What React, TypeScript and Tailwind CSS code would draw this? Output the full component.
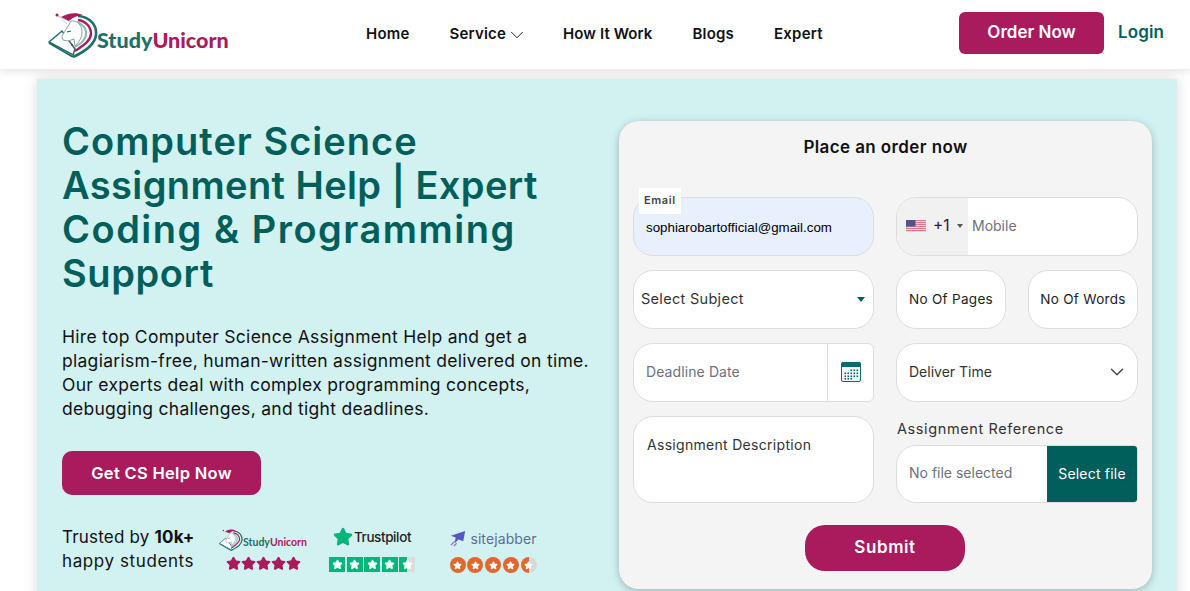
import React from 'react';
import { ChevronDown, Star } from 'lucide-react';

const font = "font-['Inter','Noto_Sans',sans-serif]";

const UnicornLogo: React.FC<{ className?: string }> = ({ className }) => (
  <svg viewBox="0 0 50 46" className={className} fill="none">
    {/* book */}
    <path d="M1 30 L14 19 L27 37 L25 43 Z" fill="#ffffff" stroke="#1f6f6a" strokeWidth="1.5" />
    <path d="M1 31 L25 45" stroke="#1f6f6a" strokeWidth="2" />
    {/* mane */}
    <path d="M30 4 C42 5 49 13 48 23 C47 33 36 40 25 45" stroke="#1f6f6a" strokeWidth="2.6" />
    <path d="M30 8 C38 9 43 15 43 22 C42 30 34 34 27 39" stroke="#a91b5c" strokeWidth="2.4" />
    <path d="M29 10 C35 12 39 17 38 23 C37 29 32 32 27 35" stroke="#8fb8b5" strokeWidth="2" />
    {/* head */}
    <path d="M23 9 C29 8 34 13 34 20 C34 26 31 30 27 34 L26 27 L20 29 L15 28 L14 24 Z" fill="#ffffff" stroke="#7d9c9a" strokeWidth="0.9" />
    <path d="M19 20 L23 19" stroke="#33504e" strokeWidth="1.1" />
    {/* horn */}
    <path d="M22 10 L9 3 L19 12" fill="#ffffff" stroke="#a8bcbb" strokeWidth="0.7" />
    {/* hat */}
    <path d="M13 5 C20 1 28 0 35 3 C28 4 24 6 21 9 Z" fill="#a91b5c" />
    <circle cx="9" cy="3" r="1.5" fill="#a91b5c" />
    <circle cx="24" cy="33" r="0.9" fill="#a91b5c" />
  </svg>
);

const FlagUS: React.FC = () => (
  <svg viewBox="0 0 20 12" className="h-[12px] w-[20px]">
    <rect width="20" height="12" fill="#f3e3e5" />
    {[0, 2, 4, 6, 8, 10].map((y) => (
      <rect key={y} y={y} width="20" height="1.2" fill="#d67f8b" />
    ))}
    <rect width="9.5" height="6.5" fill="#50548a" />
  </svg>
);

const CalendarIcon: React.FC = () => (
  <svg viewBox="0 0 20 20" className="size-[20px]">
    <rect x="0.5" y="0.5" width="19" height="19" rx="1.5" fill="#f3f9fb" stroke="#0b6a70" />
    <rect x="0.5" y="0.5" width="19" height="4.5" fill="#0b6a70" />
    {[7.5, 10.5, 13.5, 16].map((y) =>
      [3.5, 6.5, 9.5, 12.5, 15.5].map((x) =>
        (y === 7.5 && x < 8) || (y === 16 && x > 11) ? null : <rect key={`${x}-${y}`} x={x} y={y} width="1.6" height="1.6" fill="#0b5f66" />
      )
    )}
  </svg>
);

const Pill: React.FC<{ className?: string; children: React.ReactNode }> = ({ className = 'bg-white', children }) => (
  <div className={`flex h-[59px] items-center rounded-[20px] border border-[#dddddd] ${className}`}>{children}</div>
);

const StarRow: React.FC = () => (
  <div className="flex">
    {[0, 1, 2, 3, 4].map((i) => (
      <Star key={i} size={15} fill="#a91b5c" stroke="#a91b5c" />
    ))}
  </div>
);

const TrustpilotRow: React.FC = () => (
  <div className="flex gap-[1.5px]">
    {[0, 1, 2, 3, 4].map((i) => (
      <div key={i} className={`flex h-[15px] w-[16px] items-center justify-center ${i === 4 ? 'bg-gradient-to-r from-[#00b67a] from-50% to-[#dcdcdc] to-50%' : 'bg-[#00b67a]'}`}>
        <Star size={11} fill="#ffffff" stroke="#ffffff" />
      </div>
    ))}
  </div>
);

const JabberRow: React.FC = () => (
  <div className="flex gap-[1.75px]">
    {[0, 1, 2, 3, 4].map((i) => (
      <div key={i} className={`flex size-[16px] items-center justify-center rounded-full ${i === 4 ? 'bg-gradient-to-r from-[#e2672a] from-50% to-[#d9d9d9] to-50%' : 'bg-[#e2672a]'}`}>
        <Star size={9} fill="#ffffff" stroke="#ffffff" />
      </div>
    ))}
  </div>
);

const App: React.FC = () => {
  return (
    <div className={`h-[591px] w-[1190px] overflow-hidden bg-white ${font}`}>
      <header className="relative flex h-[69px] items-center bg-white pl-[48px] pr-[26px] shadow-[0_2px_8px_rgba(0,0,0,0.12)]">
        <div className="flex w-[318px] items-center">
          <UnicornLogo className="h-[46px] w-[50px]" />
          <span className="ml-[-1px] mt-[12px] font-['Lato',sans-serif] text-[21.5px] font-black leading-none">
            <span className="text-[#1f6f6a]">Study</span>
            <span className="text-[#a91b5c]">Unicorn</span>
          </span>
        </div>
        <nav className="flex items-center gap-[40px] text-[15px] font-semibold tracking-[0.2px] text-[#111111]">
          <span>Home</span>
          <span className="flex items-center">
            Service
            <ChevronDown size={22} strokeWidth={1} className="mr-[-5px]" />
          </span>
          <span className="tracking-[0.1px]">How It Work</span>
          <span>Blogs</span>
          <span>Expert</span>
        </nav>
        <div className="mb-[3px] ml-auto flex items-center gap-[14px]">
          <button className="h-[42px] w-[145px] rounded-[6px] bg-[#a91b5c] text-[17px] font-semibold text-white">Order Now</button>
          <span className="text-[17px] font-semibold tracking-[0.1px] text-[#005f5b]">Login</span>
        </div>
      </header>

      <main className="ml-[37px] mr-[13px] mt-[10px] flex h-[560px] bg-[#d2f2f1] pl-[25px] pt-[40px] shadow-[0_0_12px_rgba(0,0,0,0.15)]">
        <section className="w-[557px] shrink-0">
          <h1 className="text-[38px] font-semibold leading-[44px] text-[#005f5b]">
            <span className="tracking-[1px]">Computer Science</span>
            <br />
            <span className="tracking-[0.4px]">Assignment Help | Expert</span>
            <br />
            <span className="tracking-[1.5px]">Coding &amp; Programming</span>
            <br />
            <span className="tracking-[0.6px]">Support</span>
          </h1>
          <p className="mt-[30px] whitespace-nowrap text-[17.5px] leading-[24px] tracking-[0.28px] text-[#111111]">
            Hire top Computer Science Assignment Help and get a
            <br />
            plagiarism-free, human-written assignment delivered on time.
            <br />
            Our experts deal with complex programming concepts,
            <br />
            debugging challenges, and tight deadlines.
          </p>
          <button className="mt-[30px] h-[44px] w-[199px] rounded-[10px] bg-[#a91b5c] text-[16.5px] font-semibold tracking-[0.3px] text-white">Get CS Help Now</button>
          <div className="mt-[30px] flex items-start">
            <p className="w-[158px] text-[17px] leading-[24px] tracking-[0.2px] text-[#111111]">
              Trusted by <b className="font-bold">10k+</b>
              <br />
              <span className="tracking-[0.6px]">happy students</span>
            </p>
            <div className="flex w-[86px] flex-col items-center pt-[4px]">
              <div className="flex items-center">
                <UnicornLogo className="h-[22px] w-[24px]" />
                <span className="mt-[6px] font-['Lato',sans-serif] text-[10.5px] font-bold">
                  <span className="text-[#1f6f6a]">Study</span>
                  <span className="text-[#a91b5c]">Unicorn</span>
                </span>
              </div>
              <div className="mt-[5px]">
                <StarRow />
              </div>
            </div>
            <div className="ml-[23px] flex w-[86px] flex-col items-center pt-[2px]">
              <div className="flex h-[20px] items-center gap-[1px] text-[13.5px] font-medium tracking-[-0.4px] text-[#222222]">
                <Star size={20} fill="#00b67a" stroke="#00b67a" />
                Trustpilot
              </div>
              <div className="mt-[10px]">
                <TrustpilotRow />
              </div>
            </div>
            <div className="ml-[34px] flex w-[88px] flex-col items-center pt-[3px]">
              <div className="flex h-[20px] items-center gap-[2px] whitespace-nowrap text-[14px] tracking-[0.1px] text-[#5f6b94]">
                <svg viewBox="0 0 20 20" className="size-[19px] shrink-0">
                  <path d="M17 2 L15 13 L10 11 L6 15 L7 9 L2 7 Z" fill="#5a55c7" />
                  <path d="M2 17 L6 13 M5 18 L8 15" stroke="#a855d8" strokeWidth="1.2" />
                </svg>
                sitejabber
              </div>
              <div className="mt-[9px]">
                <JabberRow />
              </div>
            </div>
          </div>
        </section>

        <section className="mt-[2px] h-[468px] w-[533px] shrink-0 rounded-[20px] bg-[#f4f4f4] px-[14px] pt-[14px] shadow-[0_2px_8px_rgba(0,0,0,0.25)]">
          <h2 className="text-center text-[17px] font-semibold tracking-[0.4px] text-[#111111]">Place an order now</h2>
          <div className="mt-[36px] grid grid-cols-[241px_242px] gap-x-[22px] gap-y-[14px] text-[14px] text-[#333333]">
            <div className="relative">
              <span className="absolute left-[6px] top-[-9px] z-10 bg-white px-[5px] pb-[8px] pt-[6px] text-[11px] font-semibold leading-[12px] tracking-[0.6px] text-[#444444]">Email</span>
              <Pill className="bg-[#e8f0fe] pl-[12px] pt-[3px] font-['Liberation_Sans',sans-serif] text-[13.33px] text-black">sophiarobartofficial@gmail.com</Pill>
            </div>
            <Pill className="overflow-hidden bg-white">
              <div className="flex h-full w-[71px] items-center gap-[7px] bg-[#f1f1f1] pl-[9px] text-[15.5px] text-[#222222]">
                <FlagUS />
                <span>+1</span>
                <span className="h-0 w-0 border-x-[3px] border-t-[4px] border-x-transparent border-t-[#555555]" />
              </div>
              <span className="pb-[2px] pl-[4px] text-[#6b7280]">Mobile</span>
            </Pill>

            <Pill className="justify-between bg-white pl-[7px] pr-[8px]">
              <span className="text-[14.5px] tracking-[0.3px]">Select Subject</span>
              <span className="h-0 w-0 border-x-[4px] border-t-[5px] border-x-transparent border-t-[#005f5b]" />
            </Pill>
            <div className="flex gap-[22px]">
              <Pill className="w-[110px] justify-center whitespace-nowrap bg-white text-[13.5px] tracking-[0.3px] text-[#222222]">No Of Pages</Pill>
              <Pill className="w-[110px] justify-center whitespace-nowrap bg-white text-[13.5px] tracking-[0.3px] text-[#222222]">No Of Words</Pill>
            </div>

            <Pill className="rounded-r-[6px] bg-white pl-[12px]">
              <span className="flex-1 pb-[2px] tracking-[0.1px] text-[#6b7280]">Deadline Date</span>
              <span className="flex h-full w-[46px] items-center justify-center border-l border-[#dddddd]">
                <CalendarIcon />
              </span>
            </Pill>
            <Pill className="justify-between bg-white pl-[12px] pr-[9px]">
              <span className="pb-[2px] text-[#333333]">Deliver Time</span>
              <ChevronDown size={22} strokeWidth={1.5} className="text-[#444444]" />
            </Pill>

            <div className="h-[87px] rounded-[20px] border border-[#dddddd] bg-white pl-[13px] pt-[17px] tracking-[0.3px]">Assignment Description</div>
            <div className="mt-[3px]">
              <div className="mb-[6px] pl-[1px] text-[14.5px] leading-[20px] tracking-[0.6px]">Assignment Reference</div>
              <div className="flex h-[58px] overflow-hidden rounded-l-[20px] rounded-r-[4px] border border-[#dddddd] bg-white">
                <span className="flex flex-1 items-center pb-[3px] pl-[12px] text-[#6b7280]">No file selected</span>
                <span className="flex w-[90px] items-center justify-center bg-[#005f5b] text-[14px] tracking-[0.2px] text-white">Select file</span>
              </div>
            </div>
          </div>
          <div className="mt-[22px] flex justify-center pr-[1px]">
            <button className="h-[46px] w-[160px] rounded-[20px] bg-[#a91b5c] text-[17px] font-semibold tracking-[0.6px] text-white">Submit</button>
          </div>
        </section>
      </main>
    </div>
  );
};

export default App;
